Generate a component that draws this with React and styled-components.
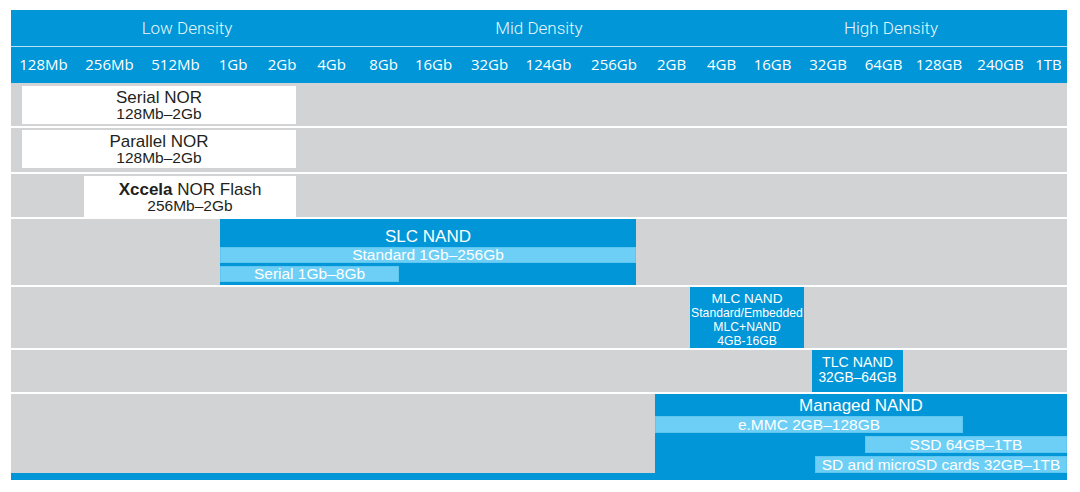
import React from "react";
import styled, { createGlobalStyle } from "styled-components";

const GlobalStyle = createGlobalStyle`
  html, body {
    margin: 0;
    padding: 0;
    background: #fff;
  }
  body {
    font-family: "Liberation Sans", Arial, sans-serif;
  }
`;

const BLUE = "#0096d7";
const LIGHT = "#6dcff6";
const GRAY = "#d1d3d4";
const INK = "#231f20";

const Page = styled.div`
  padding: 10px 0 0 11px;
`;

const Chart = styled.div`
  width: 1056px;
  display: flex;
  flex-direction: column;
`;

const DensityBar = styled.div`
  display: grid;
  grid-template-columns: repeat(3, 1fr);
  height: 36px;
  background: ${BLUE};
  border-bottom: 1px solid #b9e2f5;
`;

const Density = styled.div`
  display: flex;
  align-items: center;
  justify-content: center;
  color: #e8f6fd;
  font-family: Roboto, "Liberation Sans", sans-serif;
  font-weight: 300;
  font-size: 17px;
`;

// label cells are sized so each capacity sits over its spot on the axis
const Scale = styled.div`
  display: grid;
  grid-template-columns: ${(p) => p.$cols.map((c) => `${c}px`).join(" ")};
  align-items: center;
  height: 36px;
  padding: 0 0 3px 2px;
  box-sizing: border-box;
  background: ${BLUE};
  color: #fff;
  font-family: "Open Sans", "DejaVu Sans", sans-serif;
  font-size: 15px;
`;

const Tick = styled.span`
  text-align: center;
  white-space: nowrap;
`;

const Rows = styled.div`
  display: flex;
  flex-direction: column;
  gap: 2px;
`;

const Row = styled.div`
  display: flex;
  height: ${(p) => p.$h}px;
  background: ${GRAY};
`;

const NorBox = styled.div`
  margin-left: ${(p) => p.$x}px;
  margin-top: ${(p) => p.$top}px;
  width: ${(p) => p.$w}px;
  height: ${(p) => p.$bh}px;
  background: #fff;
  color: ${INK};
  display: flex;
  flex-direction: column;
  align-items: center;
  justify-content: center;
  padding-top: 1px;
  box-sizing: border-box;
`;

const Title = styled.div`
  font-size: ${(p) => p.$size || 17}px;
  line-height: ${(p) => p.$lh || 17}px;
  white-space: nowrap;
  b {
    font-weight: 700;
  }
`;

const Range = styled.div`
  font-size: 15.5px;
  line-height: 16px;
  white-space: nowrap;
`;

const NandBlock = styled.div`
  margin-left: ${(p) => p.$x}px;
  width: ${(p) => p.$w}px;
  height: 100%;
  background: ${BLUE};
  color: #fff;
  display: flex;
  flex-direction: column;
  align-items: ${(p) => (p.$stretch ? "stretch" : "center")};
  padding-top: ${(p) => p.$pad || 0}px;
  box-sizing: border-box;
  text-align: center;
`;

const Small = styled.div`
  font-size: ${(p) => p.$size}px;
  line-height: ${(p) => p.$lh}px;
  white-space: nowrap;
`;

const Strip = styled.div`
  display: flex;
  flex-direction: column;
  align-items: flex-start;
  gap: 3px;
`;

const Sub = styled.div`
  margin-left: ${(p) => p.$x || 0}px;
  width: ${(p) => p.$w}px;
  height: ${(p) => p.$h}px;
  background: ${LIGHT};
  border: 1px solid #5fc6ef;
  box-sizing: border-box;
  color: #fff;
  font-size: 15.5px;
  line-height: ${(p) => p.$h - 2}px;
  text-align: center;
  white-space: nowrap;
`;

const Footer = styled.div`
  height: 7px;
  background: ${BLUE};
`;

const scale = [
  "128Mb", "256Mb", "512Mb", "1Gb", "2Gb", "4Gb", "8Gb", "16Gb", "32Gb",
  "124Gb", "256Gb", "2GB", "4GB", "16GB", "32GB", "64GB", "128GB", "240GB", "1TB",
];
const scaleCols = [61, 71, 61, 54, 44, 55, 49, 51, 61, 57, 74, 41, 59, 43, 68, 43, 68, 55, 41];

const nor = [
  { name: "Serial NOR", range: "128Mb–2Gb", x: 11, w: 274, h: 43, top: 3, bh: 38 },
  { name: "Parallel NOR", range: "128Mb–2Gb", x: 11, w: 274, h: 44, top: 2, bh: 38 },
  { name: <><b>Xccela</b> NOR Flash</>, range: "256Mb–2Gb", x: 73, w: 212, h: 43, top: 2, bh: 41 },
];

export default function App() {
  return (
    <Page>
      <GlobalStyle />
      <Chart>
        <DensityBar>
          <Density>Low Density</Density>
          <Density>Mid Density</Density>
          <Density>High Density</Density>
        </DensityBar>
        <Scale $cols={scaleCols}>
          {scale.map((s) => (
            <Tick key={s}>{s}</Tick>
          ))}
        </Scale>
        <Rows>
          {nor.map((n, i) => (
            <Row key={i} $h={n.h}>
              <NorBox $x={n.x} $w={n.w} $top={n.top} $bh={n.bh}>
                <Title>{n.name}</Title>
                <Range>{n.range}</Range>
              </NorBox>
            </Row>
          ))}

          <Row $h={66}>
            <NandBlock $x={209} $w={416} $pad={8} $stretch>
              <Title $lh={20}>SLC NAND</Title>
              <Strip>
                <Sub $w={416} $h={16}>Standard 1Gb–256Gb</Sub>
                <Sub $w={179} $h={16}>Serial 1Gb–8Gb</Sub>
              </Strip>
            </NandBlock>
          </Row>

          <Row $h={61}>
            <NandBlock $x={679} $w={114} $pad={4}>
              <Small $size={13.6} $lh={15}>MLC NAND</Small>
              <Small $size={12.2} $lh={14}>Standard/Embedded</Small>
              <Small $size={12.2} $lh={14}>MLC+NAND</Small>
              <Small $size={12.2} $lh={14}>4GB-16GB</Small>
            </NandBlock>
          </Row>

          <Row $h={42}>
            <NandBlock $x={801} $w={91} $pad={4}>
              <Small $size={14.2} $lh={16}>TLC NAND</Small>
              <Small $size={13.8} $lh={16}>32GB–64GB</Small>
            </NandBlock>
          </Row>

          <Row $h={79}>
            <NandBlock $x={644} $w={412} $pad={1} $stretch>
              <Title $lh={21}>Managed NAND</Title>
              <Strip>
                <Sub $w={308} $h={17}>e.MMC 2GB–128GB</Sub>
                <Sub $x={210} $w={202} $h={17}>SSD 64GB–1TB</Sub>
                <Sub $x={160} $w={252} $h={17}>SD and microSD cards 32GB–1TB</Sub>
              </Strip>
            </NandBlock>
          </Row>
        </Rows>
        <Footer />
      </Chart>
    </Page>
  );
}
